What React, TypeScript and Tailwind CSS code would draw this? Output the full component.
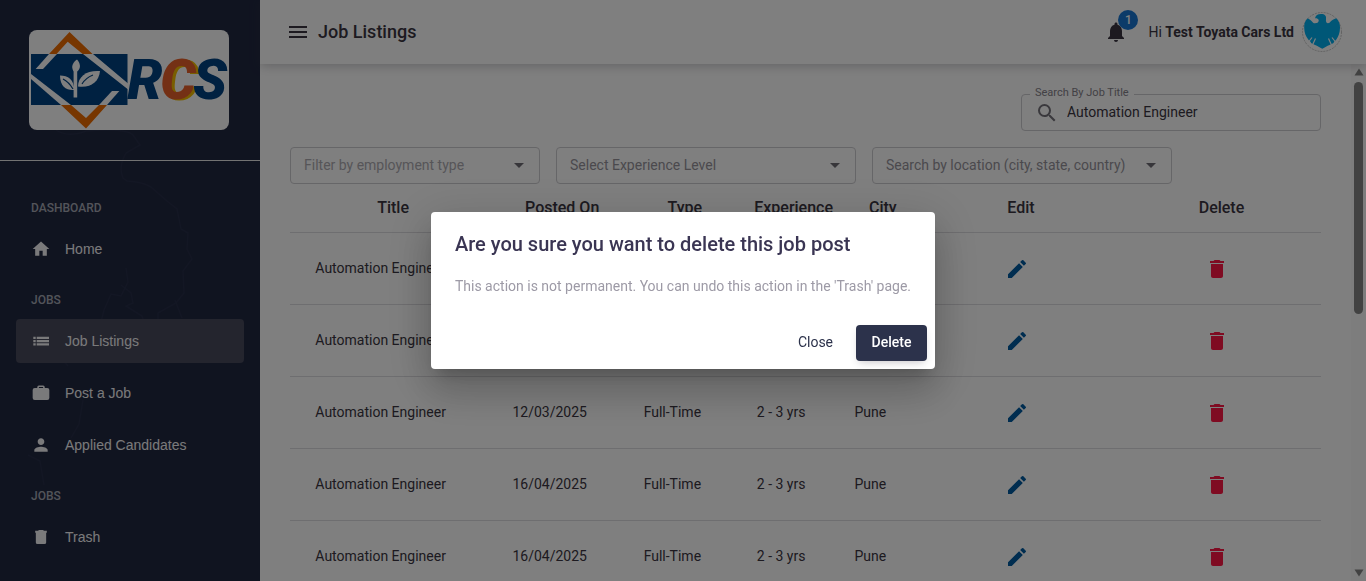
import type { ReactNode } from "react";
import {
  MdArrowDropDown,
  MdDelete,
  MdEdit,
  MdHome,
  MdMenu,
  MdNotifications,
  MdPerson,
  MdSearch,
} from "react-icons/md";

const jobs = [
  { id: 1, title: "Automation Engineer", posted: "12/03/2025" },
  { id: 2, title: "Automation Engineer", posted: "12/03/2025" },
  { id: 3, title: "Automation Engineer", posted: "12/03/2025" },
  { id: 4, title: "Automation Engineer", posted: "16/04/2025" },
  { id: 5, title: "Automation Engineer", posted: "16/04/2025" },
];

function Logo() {
  return (
    <svg viewBox="0 0 200 100" className="h-[100px] w-[200px] rounded-lg bg-white" role="img" aria-label="RCS logo">
      <path d="M40.5 2 20 24H27.5L38.7 11.7 53.7 24H63.5Z" fill="#ee6c00" />
      <path d="M32 75H42L57 88 70 75H78L57 98.5Z" fill="#ee6c00" />
      <rect x="2" y="24" width="96.5" height="51" fill="#004282" />
      <g fill="#fff">
        <path d="M20 24H28L14 39H6.7Z" />
        <path d="M54 24H64L98.5 53 103 56V60L98.5 59Z" />
        <path d="M2 44V49L32 75H42Z" />
        <path d="M70 75H78L90.3 61H83Z" />
        <path d="M44.6 40h3.6v27.5h-3.6z" />
        <path d="M48 29.5c3 3.500 4.500 8 .6 11.800h-4c-3.200-4.800-.500-9 3.400-11.800Z" />
        <path d="M31 45.500c8 0 14 4 14.200 14.500-8 .5-14-3-14.200-14.500Z" />
        <path d="M71 41c-1 11-9 17-22 15.500C49 46 58 40 71 41Z" />
      </g>
      <path d="M34 49c4 2 7 5 10 10M64 45c-5 2-8 4-11 9" stroke="#004282" strokeWidth="1.200" fill="none" />
      <g fontFamily="Roboto, sans-serif" fontWeight="900" fontStyle="italic" fontSize="56" textAnchor="middle">
        <text x="116" y="69" fill="#004282">
          R
        </text>
        <text x="149" y="69" fill="#e8602a" className="drop-shadow-[3px_1px_0_#f2bd00]">
          C
        </text>
        <text x="181" y="69" fill="#004282">
          S
        </text>
      </g>
    </svg>
  );
}

function ListIcon() {
  return (
    <svg viewBox="0 0 20 20" width="20" height="20" fill="currentColor" aria-hidden="true">
      <path d="M2.300 5.800h2.400V8H2.300zM5.700 5.800H18V8H5.700zM2.300 9h2.400v2.200H2.300zM5.700 9H18v2.200H5.700zM2.300 12.200h2.400v2.200H2.300zM5.700 12.200H18v2.200H5.700z" />
    </svg>
  );
}

function BriefcaseIcon() {
  return (
    <svg viewBox="0 0 24 24" width="20" height="20" fill="currentColor" aria-hidden="true">
      <path d="M9.500 3h5A2 2 0 0 1 16.500 5v1H19.500A2.500 2.500 0 0 1 22 8.500V18a2.500 2.500 0 0 1-2.500 2.500h-15A2.500 2.500 0 0 1 2 18V8.500A2.500 2.500 0 0 1 4.500 6H7.500V5a2 2 0 0 1 2-2Zm0 1.800V6h5V4.800Z" />
    </svg>
  );
}

function TrashIcon() {
  return (
    <svg viewBox="0 0 24 24" width="20" height="20" fill="currentColor" aria-hidden="true">
      <path d="M9.500 3.500h5l1 1H19V7h-.8v11.500a2 2 0 0 1-2 2H7.800a2 2 0 0 1-2-2V7H5V4.500h3.500Z" />
    </svg>
  );
}

function Avatar() {
  return (
    <svg viewBox="0 0 40 40" className="size-10" role="img" aria-label="Test Toyata Cars Ltd">
      <circle cx="20" cy="20" r="19.500" fill="#fff" stroke="#b5b5b5" strokeWidth=".8" strokeDasharray="2 1" />
      <path
        fill="#00aeef"
        d="M13 6.300C13.500 3.500 15.500 2 19 2c4 0 5.500 2 5 5-.3 2.500.3 4.300 2 4.300 2.500 0 2.500-3.500 8.300-5 2.500 2.500 3.900 5.500 3.700 9.500 0 5.500-2 9-3.500 11.500-.8 1.500-2.500 2-3 3.700-1 1-2.500 1.200-4 2-2.500 1-4.500 2.500-7.200 3.700-2.700-1.200-4.700-2.700-7.200-3.700-1.500-.8-3-1-4-2-.5-1.700-2.200-2.200-3-3.700C4 24.500 2.200 21 2.200 15.500 2 12 3 9 5.300 6.500 10 7.500 10 11.300 13 11.300c2.500 0 4-1.300 3.700-3.300C16 6.500 14.500 6 13 6.300Z"
      />
      <path
        d="M10 25.500 6.500 30M13.500 26.500 10.500 33M30 25.500 33.500 30M26.500 26.500 29.500 33"
        stroke="#fff"
        strokeWidth="1.200"
        fill="none"
      />
    </svg>
  );
}

function MapBackdrop() {
  return (
    <svg
      viewBox="0 0 260 581"
      preserveAspectRatio="xMinYMin slice"
      className="absolute inset-0 size-full"
      fill="none"
      stroke="#272e48"
      strokeWidth="1.500"
      aria-hidden="true"
    >
      <path d="M56 130q12 8 30 1 40-3 47 4l7 10-14 8q-8 14-3 25l4 3q16 1 24 6l16 14 10 8 4 20 7 4-1 16 5 10-9 12 1 22-8 10-18 10v14l-5 14-8 3-10-2-24 4" />
      <path d="M126 268l2 14-7 14-10-2-7 16-5 20v20M121 285l10 8 2 10-7 3 16 10 4 12-7 12M175 300l7 18M56 352l12 14M83 400l-4 24-8 14M28 455l12 6 4 24" />
    </svg>
  );
}

function NavLabel({ children }: { children: ReactNode }) {
  return <h2 className="px-[15px] pt-[21px] pb-[11px] text-xs leading-4 font-medium text-[#a6a9b4]">{children}</h2>;
}

function NavItem({ icon, label, active }: { icon: ReactNode; label: string; active?: boolean }) {
  return (
    <li>
      <a
        href="#"
        aria-current={active ? "page" : undefined}
        className={
          active
            ? "flex h-11 items-center gap-[14px] rounded bg-[#484a5c] px-[15px] text-[#f4f4f6]"
            : "flex h-11 items-center gap-[14px] rounded px-[15px] text-[#f4f4f6]"
        }
      >
        {icon}
        <span className="font-['Liberation_Sans',sans-serif] text-sm">{label}</span>
      </a>
    </li>
  );
}

function Sidebar() {
  return (
    <aside className="relative w-[260px] shrink-0 overflow-hidden bg-[#212841]">
      <MapBackdrop />
      <div className="relative flex justify-center border-b border-[#e6e6e6] py-[30px] pr-[2px]">
        <Logo />
      </div>
      <nav className="relative px-4 pt-[18px]" aria-label="Main">
        <NavLabel>DASHBOARD</NavLabel>
        <ul>
          <NavItem icon={<MdHome size={20} />} label="Home" />
        </ul>
        <NavLabel>JOBS</NavLabel>
        <ul className="flex flex-col gap-2">
          <NavItem icon={<ListIcon />} label="Job Listings" active />
          <NavItem icon={<BriefcaseIcon />} label="Post a Job" />
          <NavItem icon={<MdPerson size={20} />} label="Applied Candidates" />
        </ul>
        <NavLabel>JOBS</NavLabel>
        <ul>
          <NavItem icon={<TrashIcon />} label="Trash" />
        </ul>
      </nav>
    </aside>
  );
}

function Header() {
  return (
    <header className="relative flex h-16 shrink-0 items-center justify-between bg-white pr-6 pl-[26px] shadow-[0_2px_10px_rgba(58,53,65,0.28)]">
      <div className="flex items-center gap-2">
        <button type="button" aria-label="Toggle menu">
          <MdMenu size={24} />
        </button>
        <h1 className="text-lg leading-6 font-medium">Job Listings</h1>
      </div>
      <div className="flex items-center">
        <button type="button" aria-label="Notifications" className="relative">
          <MdNotifications size={24} />
          <span className="absolute -top-[10px] left-[14px] flex size-5 items-center justify-center rounded-full bg-[#1976d2] text-xs leading-none font-medium text-white">
            1
          </span>
        </button>
        <p className="ml-5 text-sm">
          Hi <b className="font-bold">Test Toyata Cars Ltd</b>
        </p>
        <div className="ml-2">
          <Avatar />
        </div>
      </div>
    </header>
  );
}

function FilterSelect({ label, width, tone }: { label: string; width: string; tone: string }) {
  return (
    <div className={`relative ${width}`}>
      <select
        aria-label={label}
        className={`block h-[37px] w-full appearance-none rounded border border-[#cdccd0] bg-transparent pr-8 pb-[2px] pl-[13px] text-sm ${tone}`}
      >
        <option>{label}</option>
      </select>
      <MdArrowDropDown size={24} className="pointer-events-none absolute top-[6px] right-[9px] text-[#6f6d75]" />
    </div>
  );
}

function SearchField() {
  return (
    <div className="relative flex h-[37px] w-[300px] items-center gap-2 rounded border border-[#cdccd0] pl-[13px]">
      <label htmlFor="job-search" className="absolute -top-[10px] left-2 bg-white px-[5px] text-[11px] leading-4 text-[#85828a]">
        Search By Job Title
      </label>
      <MdSearch size={24} className="shrink-0 text-[#75727a]" />
      <input
        id="job-search"
        type="text"
        defaultValue="Automation Engineer"
        className="min-w-0 flex-1 bg-transparent pr-3 pb-[2px] text-sm outline-none"
      />
    </div>
  );
}

function JobTable() {
  return (
    <table className="w-full table-fixed border-collapse text-center">
      <colgroup>
        <col className="w-[20%]" />
        <col className="w-[12.8%]" />
        <col className="w-[11%]" />
        <col className="w-[10.1%]" />
        <col className="w-[7.2%]" />
        <col className="w-[19.6%]" />
        <col className="w-[19.3%]" />
      </colgroup>
      <thead>
        <tr className="h-12 border-b border-[#dddce0] text-base">
          <th className="font-medium">Title</th>
          <th className="font-medium">Posted On</th>
          <th className="font-medium">Type</th>
          <th className="font-medium">Experience</th>
          <th className="font-medium">City</th>
          <th className="font-medium">Edit</th>
          <th className="font-medium">Delete</th>
        </tr>
      </thead>
      <tbody>
        {jobs.map((job) => (
          <tr key={job.id} className="h-[72px] border-b border-[#dddce0] text-sm whitespace-nowrap">
            <td className="pr-[25px]">{job.title}</td>
            <td className="pr-[25px]">{job.posted}</td>
            <td className="pr-[25px]">Full-Time</td>
            <td className="pr-[25px]">2 - 3 yrs</td>
            <td className="pr-[25px]">Pune</td>
            <td className="pt-[2px] pr-2">
              <button type="button" aria-label="Edit job" className="align-middle text-[#005ba1]">
                <MdEdit size={24} />
              </button>
            </td>
            <td className="pt-[2px] pr-2">
              <button type="button" aria-label="Delete job" className="align-middle text-[#ff1744]">
                <MdDelete size={24} />
              </button>
            </td>
          </tr>
        ))}
      </tbody>
    </table>
  );
}

function ScrollTrack() {
  return (
    <div className="flex w-[15px] shrink-0 flex-col items-center bg-[#fafafa] py-1" aria-hidden="true">
      <svg viewBox="0 0 10 8" className="h-2 w-[10px]" fill="#858585">
        <path d="M5 0.500 9.500 7.500H.5Z" />
      </svg>
      <div className="mt-[6px] h-[45.5%] w-[9px] rounded-full bg-[#858585]" />
      <svg viewBox="0 0 10 8" className="mt-auto h-2 w-[10px]" fill="#858585">
        <path d="M5 7.500 9.500.5H.5Z" />
      </svg>
    </div>
  );
}

function ConfirmDialog() {
  return (
    <div className="fixed inset-0 flex items-center justify-center bg-black/50">
      <div
        role="dialog"
        aria-modal="true"
        aria-labelledby="confirm-title"
        className="rounded bg-white shadow-[0_11px_15px_-7px_rgba(0,0,0,0.2),0_24px_38px_3px_rgba(0,0,0,0.14),0_9px_46px_8px_rgba(0,0,0,0.12)]"
      >
        <h2 id="confirm-title" className="px-6 py-4 text-xl leading-8 font-medium text-[#3a3553]">
          Are you sure you want to delete this job post
        </h2>
        <p className="px-6 pb-5 text-sm leading-[21px] text-[#9d9aa6]">
          This action is not permanent. You can undo this action in the 'Trash' page.
        </p>
        <div className="flex justify-end gap-2 p-2 text-sm">
          <button type="button" className="h-9 rounded px-[15px] pb-[2px] text-[#2c324b]">
            Close
          </button>
          <button
            type="button"
            className="h-9 w-[71px] rounded bg-[#2c324b] pb-[2px] font-medium text-white shadow-[0_4px_8px_-3px_rgba(58,53,65,0.3)]"
          >
            Delete
          </button>
        </div>
      </div>
    </div>
  );
}

export default function App() {
  return (
    <div className="flex h-screen overflow-hidden bg-white font-[Roboto,sans-serif] text-[#3a3541]">
      <Sidebar />
      <div className="flex min-w-0 flex-1 flex-col">
        <Header />
        <div className="flex min-h-0 flex-1">
          <main className="min-w-0 flex-1 overflow-hidden px-[30px] pt-[30px]">
            <div className="flex justify-end">
              <SearchField />
            </div>
            <div className="mt-4 flex gap-4">
              <FilterSelect label="Filter by employment type" width="w-[250px]" tone="text-[#adabb1]" />
              <FilterSelect label="Select Experience Level" width="w-[300px]" tone="text-[#96939b]" />
              <FilterSelect label="Search by location (city, state, country)" width="w-[300px]" tone="text-[#96939b]" />
            </div>
            <JobTable />
          </main>
          <ScrollTrack />
        </div>
      </div>
      <ConfirmDialog />
    </div>
  );
}
